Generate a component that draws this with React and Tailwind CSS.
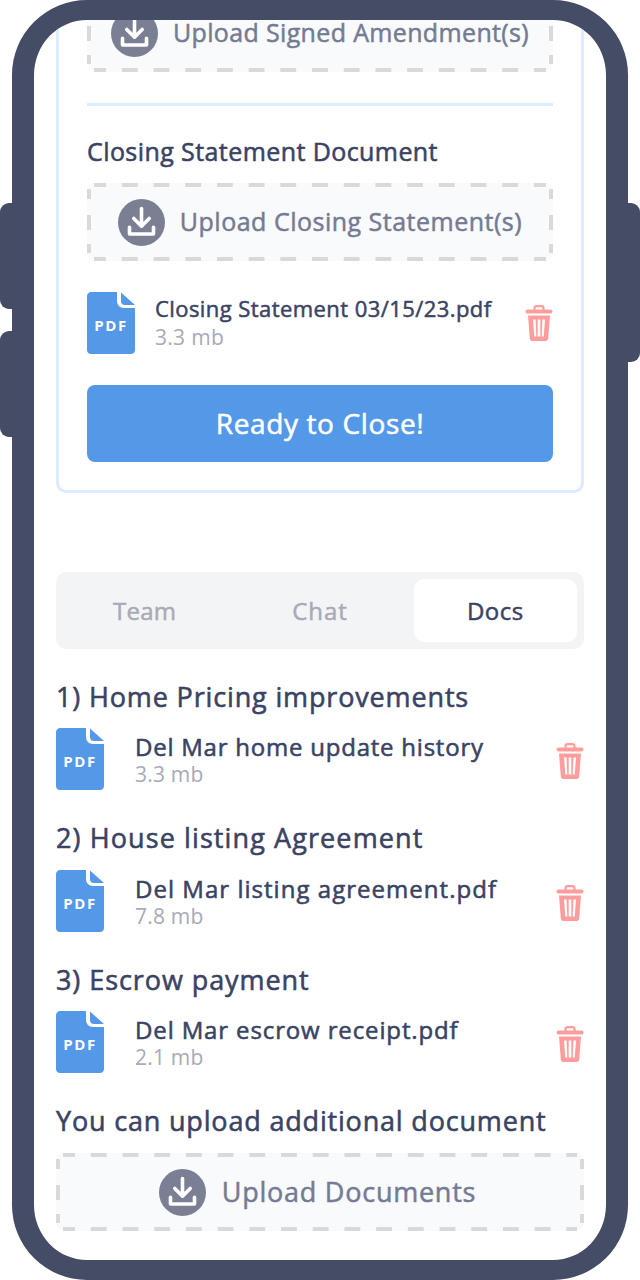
import React from "react";

const font = { fontFamily: '"Open Sans", "Noto Sans", sans-serif' };

function UploadCircle() {
  return (
    <svg width="47" height="47" viewBox="0 0 47 47" className="shrink-0">
      <circle cx="23.5" cy="23.5" r="23.5" fill="#7a7f94" />
      <path d="M23.5 9.5V26M15.8 19.5L23.5 27.2L31.2 19.5" fill="none" stroke="#fff" strokeWidth="3.6" strokeLinecap="round" strokeLinejoin="round" />
      <path d="M11.5 28.3V35H35.5V28.3" fill="none" stroke="#fff" strokeWidth="3.6" strokeLinejoin="round" strokeLinecap="round" />
    </svg>
  );
}

function DashedBox({ w, label, gap, textClass, className }) {
  const h = 78;
  return (
    <div className={`relative flex h-[78px] items-center justify-center rounded-[8px] bg-[#f9fafb] ${className || ""}`} style={{ gap }}>
      <svg width={w} height={h} className="absolute left-0 top-0" fill="none" stroke="#d9d9d9" strokeWidth="4">
        <line x1="7" y1="2" x2={w - 7} y2="2" strokeDasharray="15.85" strokeDashoffset="3.85" />
        <line x1="7" y1={h - 2} x2={w - 7} y2={h - 2} strokeDasharray="15.85" strokeDashoffset="3.85" />
        <line x1="2" y1="6" x2="2" y2={h - 8} strokeDasharray="10 16 15 14 9" />
        <line x1={w - 2} y1="6" x2={w - 2} y2={h - 8} strokeDasharray="10 16 15 14 9" />
      </svg>
      <div className="relative"><UploadCircle /></div>
      <span className={`relative whitespace-nowrap font-medium text-[#757b93] [-webkit-text-stroke:0.5px_#757b93] ${textClass}`}>{label}</span>
    </div>
  );
}

function PdfIcon() {
  return (
    <div className="relative h-[62px] w-[48px] shrink-0">
      <svg width="48" height="62" viewBox="0 0 48 62" className="absolute left-0 top-0">
        <path d="M4 0H30V9C30 13 33 16 37 16H48V58C48 60.5 46 62 44 62H4C2 62 0 60.5 0 58V4C0 2 2 0 4 0Z" fill="#5499e8" />
        <path d="M34 0.5L48 13H38C35.5 13 34 11.5 34 9Z" fill="#5499e8" />
      </svg>
      <span className="absolute inset-x-0 top-[24px] text-center text-[15px] font-bold leading-[18px] tracking-[1.6px] text-white">PDF</span>
    </div>
  );
}

function TrashIcon() {
  return (
    <svg width="28" height="36" viewBox="0 0 28 36" className="shrink-0">
      <path d="M9.5 5V3.2C9.5 2 10.3 1.2 11.5 1.2H16.5C17.7 1.2 18.5 2 18.5 3.2V5" fill="none" stroke="#ff9d9d" strokeWidth="2.2" />
      <rect x="0.5" y="4.5" width="27" height="4" rx="2" fill="#ff9d9d" />
      <path fillRule="evenodd" d="M3 10.5H25L23.2 33.5C23.1 35 22 36 20.8 36H7.2C6 36 4.9 35 4.8 33.5ZM8 14.5L9.3 31.5H11.3L10.6 14.5ZM12.7 14.5V31.5H15.3V14.5ZM17.4 14.5L16.7 31.5H18.7L20 14.5Z" fill="#ff9d9d" />
    </svg>
  );
}

function DocRow({ name, size, nameClass }) {
  return (
    <div className="flex h-[62px] items-start">
      <PdfIcon />
      <div className="ml-[31px] flex-1 pt-[4px]">
        <div className={`text-[24px] font-medium leading-[30px] text-[#3a4364] [-webkit-text-stroke:0.55px_#3a4364] ${nameClass}`}>{name}</div>
        <div className="mt-[1px] text-[21px] leading-[22px] tracking-[0.2px] text-[#a8aab7]">{size}</div>
      </div>
      <div className="mt-[15px]"><TrashIcon /></div>
    </div>
  );
}

function Heading({ children, className }) {
  return <div className={`h-[32px] text-[27px] font-medium leading-[32px] text-[#3a4364] [-webkit-text-stroke:0.55px_#3a4364] ${className}`}>{children}</div>;
}

export default function App() {
  return (
    <div className="relative h-[1280px] w-[640px] overflow-hidden bg-white" style={font}>
      <div className="absolute left-0 top-[203px] h-[106px] w-[14px] rounded-l-[9px] bg-[#444c66]" />
      <div className="absolute left-0 top-[331px] h-[106px] w-[14px] rounded-l-[9px] bg-[#444c66]" />
      <div className="absolute right-0 top-[203px] h-[159px] w-[14px] rounded-r-[9px] bg-[#444c66]" />
      <div className="relative ml-[12px] h-[1280px] w-[616px] overflow-hidden rounded-[75px] border-x-[22px] border-y-[20px] border-[#444c66] bg-white">
        <div className="mx-[22px]">
          <div className="mt-[-60px] rounded-[10px] border-[3px] border-[#dbecff] px-[28px] pb-[28px] pt-[31px]">
            <DashedBox w={466} label="Upload Signed Amendment(s)" gap="15px" textClass="text-[25px] tracking-[0.35px]" />
            <div className="mt-[31px] h-[3px] bg-[#dbecff]" />
            <div className="mt-[31px] h-[30px] text-[25px] font-medium leading-[28px] tracking-[0.42px] text-[#3a4364] [-webkit-text-stroke:0.55px_#3a4364]">Closing Statement Document</div>
            <DashedBox w={466} label="Upload Closing Statement(s)" gap="15px" textClass="text-[25px] tracking-[0.5px]" className="mt-[16px]" />
            <div className="mt-[31px] flex h-[62px] items-start">
              <PdfIcon />
              <div className="ml-[20px] flex-1 pt-[1px]">
                <div className="text-[22px] font-medium leading-[30px] tracking-[0.43px] text-[#3a4364] [-webkit-text-stroke:0.5px_#3a4364]">Closing Statement 03/15/23.pdf</div>
                <div className="mt-[1px] text-[21px] leading-[26px] tracking-[0.3px] text-[#a8aab7]">3.3 mb</div>
              </div>
              <div className="mt-[13px]"><TrashIcon /></div>
            </div>
            <div className="mt-[31px] flex h-[77px] items-center justify-center rounded-[8px] bg-[#5499e8] pb-[2px] text-[28px] font-medium tracking-[0.63px] text-white [-webkit-text-stroke:0.55px_#ffffff]">Ready to Close!</div>
          </div>

          <div className="mt-[79px] grid h-[77px] grid-cols-3 gap-[12px] rounded-[10px] bg-[#f3f4f6] p-[7px] text-[24px] font-medium">
            <div className="flex items-center justify-center tracking-[0.25px] text-[#a8aab7] [-webkit-text-stroke:0.5px_#a8aab7]">Team</div>
            <div className="flex items-center justify-center tracking-[1px] text-[#a8aab7] [-webkit-text-stroke:0.5px_#a8aab7]">Chat</div>
            <div className="flex items-center justify-center rounded-[10px] bg-white tracking-[0.5px] text-[#3a4364] [-webkit-text-stroke:0.5px_#3a4364]">Docs</div>
          </div>

          <div className="mt-[32px]"><Heading className="tracking-[0.85px]">1) Home Pricing improvements</Heading></div>
          <div className="mt-[15px]"><DocRow name="Del Mar home update history" size="3.3 mb" nameClass="tracking-[0.77px]" /></div>
          <div className="mt-[32px]"><Heading className="tracking-[1.1px]">2) House listing Agreement</Heading></div>
          <div className="mt-[16px]"><DocRow name="Del Mar listing agreement.pdf" size="7.8 mb" nameClass="tracking-[1.03px]" /></div>
          <div className="mt-[32px]"><Heading className="tracking-[0.93px]">3) Escrow payment</Heading></div>
          <div className="mt-[15px]"><DocRow name="Del Mar escrow receipt.pdf" size="2.1 mb" nameClass="tracking-[0.87px]" /></div>
          <div className="mt-[32px]"><Heading className="tracking-[0.82px]">You can upload additional document</Heading></div>
          <DashedBox w={528} label="Upload Documents" gap="16px" textClass="text-[27px] tracking-[0.75px]" className="mt-[16px] pr-[5px]" />
        </div>
      </div>
    </div>
  );
}
